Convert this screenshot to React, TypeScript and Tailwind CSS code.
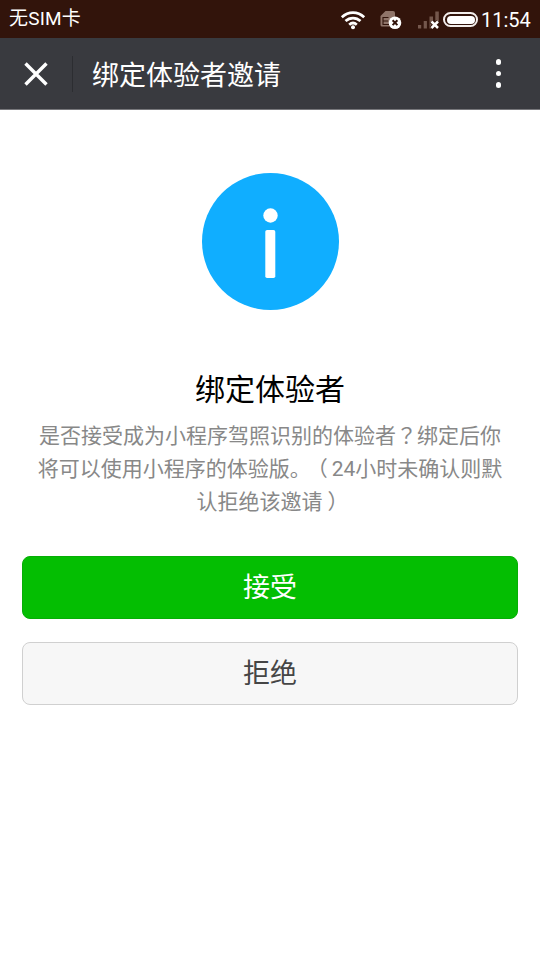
const WifiIcon = () => (
  <svg width="26" height="20" viewBox="0 0 26 20" fill="none">
    <g stroke="#fff" strokeWidth="2.700">
      <path d="M1.800 7.200C8.300 1 17.700 1 24.200 7.200" />
      <path d="M5.500 11.100C9.800 7 16.200 7 20.500 11.100" />
      <path d="M9.200 14.700C11.500 12.600 14.500 12.600 16.800 14.700" />
    </g>
    <circle cx="13" cy="17.300" r="2" fill="#fff" />
  </svg>
);

const SimIcon = () => (
  <svg width="22" height="20" viewBox="0 0 22 20" fill="none">
    <path
      d="M5.500 1H13Q15 1 15 3V16.500H2Q.500 16.500 .500 15V6Z"
      fill="#8f7469"
    />
    <path
      d="M8.500 7.500H3V14.500H9M3 11H8"
      stroke="#32140b"
      strokeWidth="1.100"
    />
    <circle cx="15" cy="12.700" r="6.300" fill="#fff" />
    <path
      d="M12.600 10.300L17.400 15.100M17.400 10.300L12.600 15.100"
      stroke="#32140b"
      strokeWidth="2"
    />
  </svg>
);

const SignalIcon = () => (
  <svg width="24" height="20" viewBox="0 0 24 20" fill="none">
    <g fill="#74574c">
      <rect x="1" y="15" width="3.200" height="3.500" />
      <rect x="6.700" y="11" width="3.200" height="7.500" />
      <rect x="12.500" y="6.500" width="3.500" height="12" />
      <rect x="18.300" y="1.500" width="3.500" height="10" />
    </g>
    <path
      d="M14.500 11.500L21 18M21 11.500L14.500 18"
      stroke="#32140b"
      strokeWidth="4.500"
    />
    <path
      d="M14.500 11.500L21 18M21 11.500L14.500 18"
      stroke="#fff"
      strokeWidth="2.500"
    />
  </svg>
);

const StatusBar = () => {
  return (
    <div className="flex h-[38px] items-start bg-[#32140b] pr-2 pl-[9px] text-white">
      <p className="text-[19px] leading-[37px] tracking-[0.2px]">无SIM卡</p>
      <div className="ml-auto flex h-[39px] items-center">
        <WifiIcon />
        <div className="ml-[14px]">
          <SimIcon />
        </div>
        <div className="ml-[15px]">
          <SignalIcon />
        </div>
        <div className="ml-[2px] h-[15px] w-[35px] rounded-full border-2 border-[#f3eeec] p-[1.5px]">
          <div className="h-full rounded-full bg-white" />
        </div>
        <p className="ml-[3px] w-[51px] pt-px text-[20px] leading-[39px] whitespace-nowrap">
          11:54
        </p>
      </div>
    </div>
  );
};

const TitleBar = () => {
  return (
    <div className="flex h-[72px] items-center border-b border-[#77777b] bg-[#393a3f] text-white">
      <svg
        className="ml-6"
        width="24"
        height="24"
        viewBox="0 0 24 24"
        stroke="#fff"
        strokeWidth="3.400"
      >
        <path d="M1.500 1.500L22.500 22.500M22.500 1.500L1.500 22.500" />
      </svg>
      <div className="ml-6 h-9 w-px bg-[#2c2d31]" />
      <h1 className="ml-[19px] pt-[5px] text-[27px] leading-[71px]">
        绑定体验者邀请
      </h1>
      <div className="mr-[39px] ml-auto flex flex-col gap-[6px]">
        <span className="size-[5.500px] rounded-full bg-white" />
        <span className="size-[5.500px] rounded-full bg-white" />
        <span className="size-[5.500px] rounded-full bg-white" />
      </div>
    </div>
  );
};

const App = () => {
  return (
    <div
      lang="zh-CN"
      className="h-[960px] w-[540px] overflow-hidden bg-white font-[Roboto,'Noto_Sans_CJK_SC',sans-serif] [text-spacing-trim:space-all]"
    >
      <StatusBar />
      <TitleBar />

      <div className="flex flex-col items-center px-[22px] pt-[63px]">
        <svg width="137" height="137" viewBox="0 0 137 137">
          <circle cx="68.500" cy="68.500" r="68.500" fill="#10aeff" />
          <circle cx="68.500" cy="42.500" r="7.200" fill="#fff" />
          <rect x="63.300" y="57" width="10" height="48" rx="1.800" fill="#fff" />
        </svg>

        <h2 className="mt-[57px] text-[30px] leading-[45px] text-black">
          绑定体验者
        </h2>
        <p className="mt-[8px] text-center text-[21px] leading-[33px] whitespace-nowrap text-[#888888]">
          是否接受成为小程序驾照识别的体验者
          <span
            lang="zh-TW"
            className="font-['Noto_Sans_CJK_TC',sans-serif] leading-none"
          >
            ？
          </span>
          绑定后你
          <br />
          将可以使用小程序的体验版。
          <span className="mr-[4px] -ml-[4px]">（</span>
          24小时未确认则默
          <br />
          认拒绝该邀请
          <span className="-mr-[5px] ml-[5px]">）</span>
        </p>

        <button className="mt-[37px] h-[63px] w-full rounded-[8px] border border-[#06ae06] bg-[#04be02] pt-[2px] text-[27px] leading-none text-white">
          接受
        </button>
        <button className="mt-[23px] h-[63px] w-full rounded-[8px] border border-[#d0d0d0] bg-[#f7f7f7] pt-[2px] text-[27px] leading-none text-[#454545]">
          拒绝
        </button>
      </div>
    </div>
  );
};

export default App;
